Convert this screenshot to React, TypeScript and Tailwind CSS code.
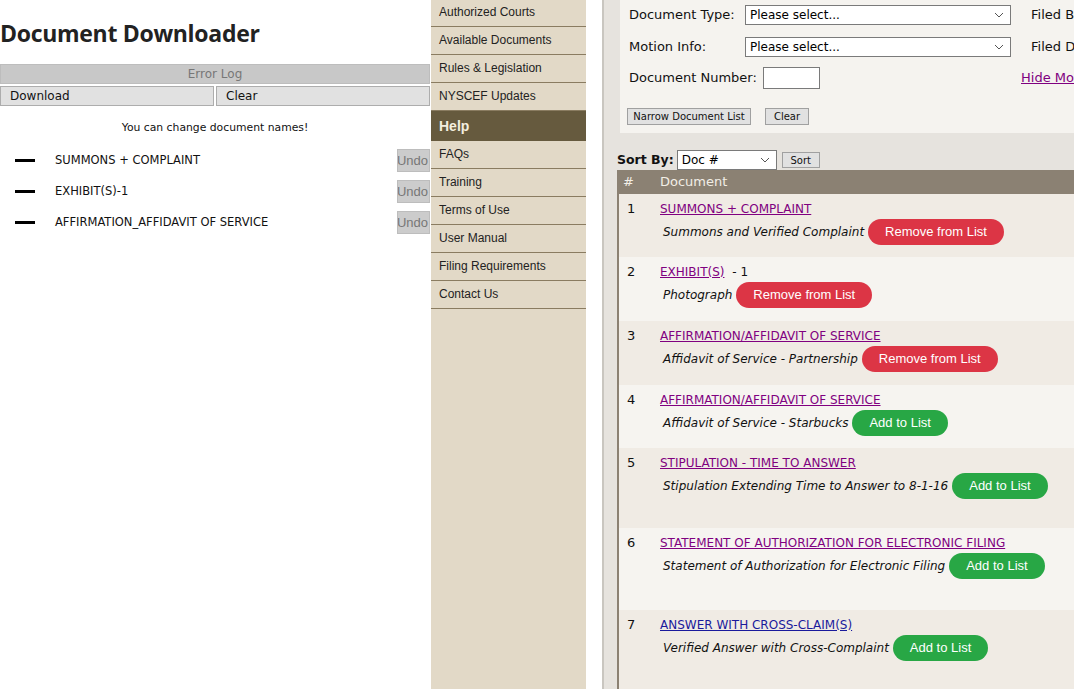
import React from "react";

const navTop = ["Authorized Courts", "Available Documents", "Rules & Legislation", "NYSCEF Updates"];
const navHelp = ["FAQs", "Training", "Terms of Use", "User Manual", "Filing Requirements", "Contact Us"];

const renamed = ["SUMMONS + COMPLAINT", "EXHIBIT(S)-1", "AFFIRMATION_AFFIDAVIT OF SERVICE"];

type Doc = {
  n: number;
  title: string;
  suffix?: string;
  desc: string;
  inList: boolean;
  h: string;
  visited: boolean;
};

const docs: Doc[] = [
  { n: 1, title: "SUMMONS + COMPLAINT", desc: "Summons and Verified Complaint", inList: true, h: "h-[63px]", visited: true },
  { n: 2, title: "EXHIBIT(S)", suffix: " - 1", desc: "Photograph", inList: true, h: "h-[64px]", visited: true },
  { n: 3, title: "AFFIRMATION/AFFIDAVIT OF SERVICE", desc: "Affidavit of Service - Partnership", inList: true, h: "h-[64px]", visited: true },
  { n: 4, title: "AFFIRMATION/AFFIDAVIT OF SERVICE", desc: "Affidavit of Service - Starbucks", inList: false, h: "h-[63px]", visited: true },
  { n: 5, title: "STIPULATION - TIME TO ANSWER", desc: "Stipulation Extending Time to Answer to 8-1-16", inList: false, h: "h-[80px]", visited: true },
  { n: 6, title: "STATEMENT OF AUTHORIZATION FOR ELECTRONIC FILING", desc: "Statement of Authorization for Electronic Filing", inList: false, h: "h-[82px]", visited: true },
  { n: 7, title: "ANSWER WITH CROSS-CLAIM(S)", desc: "Verified Answer with Cross-Complaint", inList: false, h: "h-[90px]", visited: false },
];

function Chevron() {
  return (
    <svg width="10" height="6" viewBox="0 0 10 6" className="shrink-0">
      <path d="M1 1 L5 5 L9 1" fill="none" stroke="#555" strokeWidth="1" />
    </svg>
  );
}

function Select({ w, text }: { w: string; text: string }) {
  return (
    <div className={`${w} h-[20px] bg-white border border-[#7a7a7a] flex items-center justify-between pl-[4px] pr-[6px] text-[12px] text-black`}>
      <span>{text}</span>
      <Chevron />
    </div>
  );
}

function LeftPanel() {
  return (
    <div className="w-[431px] shrink-0 bg-white pr-[1px] font-['DejaVu_Sans',sans-serif]">
      <h1 className="pt-[19px] h-[64px] text-[23px] font-bold text-[#222] tracking-[-0.3px] leading-[28px] font-['Open_Sans',sans-serif]">
        Document Downloader
      </h1>
      <div className="h-[20px] bg-[#c8c8c8] border border-[#bdbdbd] flex items-center justify-center text-[12px] text-[#777]">
        Error Log
      </div>
      <div className="flex gap-[2px] mt-[2px]">
        <div className="flex-1 h-[20px] bg-[#e1e1e1] border border-[#adadad] flex items-center pl-[9px] text-[12px] text-[#111]">
          Download
        </div>
        <div className="flex-1 h-[20px] bg-[#e1e1e1] border border-[#adadad] flex items-center pl-[9px] text-[12px] text-[#111]">
          Clear
        </div>
      </div>
      <div className="text-center text-[10.8px] text-[#111] mt-[14px] leading-[16px]">You can change document names!</div>
      <div className="mt-[13px] flex flex-col gap-[8px]">
        {renamed.map((r) => (
          <div key={r} className="flex items-center h-[23px]">
            <div className="w-[20px] h-[3px] bg-black ml-[15px] mr-[20px]" />
            <div className="flex-1 text-[11.5px] text-[#111]">{r}</div>
            <div className="w-[33px] h-[23px] bg-[#cccccc] border border-[#bdbdbd] flex items-center justify-end pr-[1px] overflow-hidden text-[13px] text-[#777] font-['Liberation_Sans',sans-serif]">
              Undo
            </div>
          </div>
        ))}
      </div>
    </div>
  );
}

function Nav() {
  return (
    <div className="w-[155px] shrink-0 bg-[#e2d9c7] font-['Liberation_Sans',sans-serif] text-[12px] text-[#222]">
      <div className="-mt-[1px]">
        {navTop.map((t) => (
          <div key={t} className="h-[28px] border-b border-[#8a7c61] flex items-center pl-[8px] pb-[2px]">
            {t}
          </div>
        ))}
        <div className="h-[30px] bg-[#665a3e] flex items-center pl-[8px] text-[14px] font-bold text-[#f3eedf]">Help</div>
        {navHelp.map((t) => (
          <div key={t} className="h-[28px] border-b border-[#8a7c61] flex items-center pl-[8px] pb-[2px]">
            {t}
          </div>
        ))}
      </div>
    </div>
  );
}

function PillButton({ remove }: { remove: boolean }) {
  return (
    <div
      className={`h-[26px] rounded-full flex items-center px-[17px] text-[13px] text-white font-['Liberation_Sans',sans-serif] ${
        remove ? "bg-[#dc3545]" : "bg-[#28a745]"
      }`}
    >
      {remove ? "Remove from List" : "Add to List"}
    </div>
  );
}

function Filters() {
  return (
    <div className="h-[133px] bg-[#f5f3ef] ml-[3px] pl-[9px] pt-[5px] text-[13px] text-[#111] overflow-hidden">
      <div className="flex items-center h-[20px]">
        <span className="w-[116px] shrink-0">Document Type:</span>
        <Select w="w-[266px] shrink-0" text="Please select..." />
        <span className="ml-[20px]">Filed By</span>
      </div>
      <div className="flex items-center h-[20px] mt-[12px]">
        <span className="w-[116px] shrink-0">Motion Info:</span>
        <Select w="w-[266px] shrink-0" text="Please select..." />
        <span className="ml-[20px]">Filed Date</span>
      </div>
      <div className="flex items-center h-[22px] mt-[10px]">
        <span className="w-[134px] shrink-0">Document Number:</span>
        <div className="w-[57px] h-[22px] shrink-0 bg-white border border-[#7a7a7a]" />
        <span className="ml-[201px] text-[#800080] underline">Hide More</span>
      </div>
      <div className="flex items-center gap-[14px] mt-[19px] -ml-[2px] text-[10px]">
        <div className="h-[17px] w-[124px] justify-center bg-[#e1e1e1] border border-[#a0a0a0] flex items-center">Narrow Document List</div>
        <div className="h-[17px] w-[44px] justify-center bg-[#e1e1e1] border border-[#a0a0a0] flex items-center">Clear</div>
      </div>
    </div>
  );
}

function DocTable() {
  return (
    <div className="border-l-2 border-[#8b8173]">
      <div className="h-[24px] bg-[#8b8173] flex items-center text-[13px] text-[#f2eee6] -ml-[2px]">
        <span className="w-[43px] pl-[6px]">#</span>
        <span>Document</span>
      </div>
      {docs.map((d, i) => (
        <div key={d.n} className={`${d.h} flex pt-[7px] ${i % 2 === 0 ? "bg-[#f0ebe4]" : "bg-[#f6f4f0]"}`}>
          <div className="w-[41px] pl-[8px] text-[13px] text-[#111] leading-[16px]">{d.n}</div>
          <div className="flex flex-col">
            <div className="text-[12px] leading-[16px]">
              <span className={`underline ${d.visited ? "text-[#800080]" : "text-[#1a1a9c]"}`}>{d.title}</span>
              {d.suffix && <span className="text-[#111] ml-[4px]">{d.suffix}</span>}
            </div>
            <div className="flex items-center gap-[4px] mt-[2px]">
              <span className="italic text-[12px] text-[#111] pl-[3px]">{d.desc}</span>
              <PillButton remove={d.inList} />
            </div>
          </div>
        </div>
      ))}
    </div>
  );
}

export default function App() {
  return (
    <div className="w-[1074px] h-[689px] overflow-hidden flex bg-white">
      <LeftPanel />
      <Nav />
      <div className="w-[16px] shrink-0 bg-white" />
      <div className="flex-1 min-w-0 border-l-2 border-[#c9c6c0] bg-[#e6e3de] font-['DejaVu_Sans',sans-serif] overflow-hidden whitespace-nowrap">
        <div className="pl-[13px]">
          <Filters />
          <div className="flex items-center h-[20px] mt-[17px] text-[13px]">
            <span className="font-bold text-[12.5px] text-[#111] mr-[3px]">Sort By:</span>
            <div className="w-[100px] h-[20px] bg-white border border-[#7a7a7a] flex items-center justify-between pl-[4px] pr-[6px] text-[12px] text-black">
              <span>Doc #</span>
              <Chevron />
            </div>
            <div className="ml-[5px] h-[16px] w-[38px] justify-center bg-[#e1e1e1] border border-[#a0a0a0] flex items-center text-[10px] text-[#111]">Sort</div>
          </div>
          <DocTable />
        </div>
      </div>
    </div>
  );
}
